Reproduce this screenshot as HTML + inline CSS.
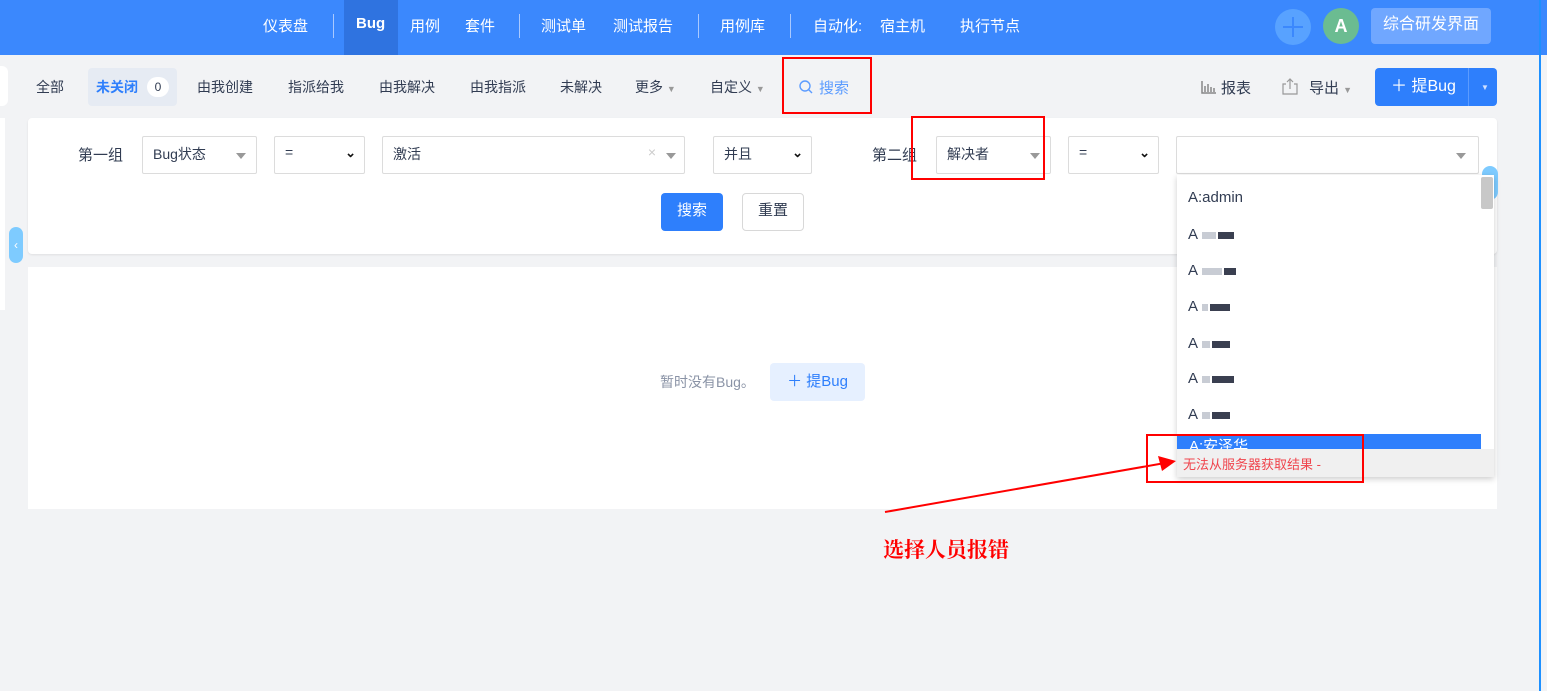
<!DOCTYPE html>
<html><head><meta charset="utf-8"><style>
*{box-sizing:border-box;margin:0;padding:0}
body{width:1547px;height:691px;overflow:hidden;background:#f2f3f5;font-family:"Liberation Sans","Noto Sans CJK SC",sans-serif;font-size:14px;color:#313c52;position:relative}
.a{position:absolute}
.top{left:0;top:0;width:1547px;height:55px;background:#3b88fd}
.nav{color:#fff;font-size:15px;top:15px}
.sep{top:14px;width:1px;height:24px;background:#a9c9ff}
.tab{top:77px;font-size:14px;color:#313c52}
.sel{background:#fff;border:1px solid #dcdcdc;height:38px;top:136px;border-radius:2px;font-size:14px;padding:7px 10px}
.tri{width:0;height:0;border-left:5px solid transparent;border-right:5px solid transparent;border-top:6px solid #999}
.chev{font-size:13px;font-weight:bold;color:#111}
.red{border:2px solid #f00}
.blur{display:inline-block;height:7px;background:#c8ccd4;margin-right:2px}
</style></head><body>
<div class="a top"></div>
<div class="a" style="left:344px;top:0;width:54px;height:55px;background:#2f73e0"></div>
<div class="a nav" style="left:263px">仪表盘</div>
<div class="a sep" style="left:333px"></div>
<div class="a nav" style="left:356px;font-weight:bold">Bug</div>
<div class="a nav" style="left:410px">用例</div>
<div class="a nav" style="left:465px">套件</div>
<div class="a sep" style="left:519px"></div>
<div class="a nav" style="left:541px">测试单</div>
<div class="a nav" style="left:613px">测试报告</div>
<div class="a sep" style="left:698px"></div>
<div class="a nav" style="left:720px">用例库</div>
<div class="a sep" style="left:790px"></div>
<div class="a nav" style="left:813px">自动化:</div>
<div class="a nav" style="left:880px">宿主机</div>
<div class="a nav" style="left:960px">执行节点</div>
<div class="a" style="left:1275px;top:9px;width:36px;height:36px;border-radius:50%;background:#58a2ff"></div>
<div class="a" style="left:1283px;top:26px;width:20px;height:2px;background:#3b88fd"></div>
<div class="a" style="left:1292px;top:17px;width:2px;height:20px;background:#3b88fd"></div>
<div class="a" style="left:1323px;top:8px;width:36px;height:36px;border-radius:50%;background:#6bbc91;color:#fff;font-size:18px;line-height:36px;text-align:center;font-weight:bold">A</div>
<div class="a" style="left:1371px;top:8px;width:120px;height:36px;border-radius:4px;background:#70a7ff;color:#fff;font-size:16px;line-height:34px;text-align:center">综合研发界面</div>

<div class="a" style="left:0;top:66px;width:8px;height:40px;background:#fff;border-radius:0 6px 6px 0"></div>
<div class="a" style="left:0;top:118px;width:5px;height:192px;background:#fff"></div>
<div class="a tab" style="left:36px">全部</div>
<div class="a" style="left:88px;top:68px;width:89px;height:38px;background:#e6ebf3;border-radius:4px"></div>
<div class="a tab" style="left:96px;color:#2e7ffc;font-weight:bold">未关闭</div>
<div class="a" style="left:147px;top:77px;width:22px;height:20px;border-radius:10px;background:#fff;font-size:12px;text-align:center;line-height:20px">0</div>
<div class="a tab" style="left:197px">由我创建</div>
<div class="a tab" style="left:288px">指派给我</div>
<div class="a tab" style="left:379px">由我解决</div>
<div class="a tab" style="left:470px">由我指派</div>
<div class="a tab" style="left:560px">未解决</div>
<div class="a tab" style="left:635px">更多 <span style="font-size:9px;color:#999">▼</span></div>
<div class="a tab" style="left:710px">自定义 <span style="font-size:9px;color:#999">▼</span></div>
<svg class="a" style="left:799px;top:80px" width="14" height="14"><circle cx="6" cy="6" r="5" fill="none" stroke="#5c9cff" stroke-width="1.4"/><line x1="9.5" y1="9.5" x2="13" y2="13" stroke="#5c9cff" stroke-width="1.4"/></svg>
<div class="a tab" style="left:819px;color:#5c9cff;font-size:15px">搜索</div>
<div class="a red" style="left:782px;top:57px;width:90px;height:57px"></div>
<svg class="a" style="left:1201px;top:80px" width="16" height="14"><path d="M1 1V13H15M4 6V12M7 4V12M10 7V12M13 8V12" stroke="#888" stroke-width="1.5" fill="none"/></svg>
<div class="a tab" style="left:1221px;font-size:15px">报表</div>
<svg class="a" style="left:1281px;top:77px" width="18" height="18"><path d="M5 7H2V17H16V7H13M9 12V2M6 5L9 2L12 5" stroke="#999" stroke-width="1.2" fill="none"/></svg>
<div class="a tab" style="left:1309px;font-size:15px">导出 <span style="font-size:9px;color:#999">▼</span></div>
<div class="a" style="left:1375px;top:68px;width:122px;height:38px;background:#2e7ffc;border-radius:4px;color:#fff;font-size:16px;line-height:38px;padding-left:16px">＋ 提Bug</div>
<div class="a" style="left:1468px;top:68px;width:1px;height:38px;background:#5b9bff"></div>
<div class="a" style="left:1481px;top:83px;font-size:8px;color:#cfe0ff">▼</div>

<div class="a" style="left:28px;top:118px;width:1469px;height:136px;background:#fff;border-radius:4px;box-shadow:0 1px 2px rgba(0,0,0,.08)"></div>
<div class="a" style="left:9px;top:227px;width:14px;height:36px;background:#7ecbff;border-radius:7px;color:#fff;font-size:12px;line-height:36px;text-align:center">‹</div>
<div class="a" style="left:78px;top:144px;font-size:15px">第一组</div>
<div class="a sel" style="left:142px;width:115px">Bug状态<div class="a tri" style="right:10px;top:16px"></div></div>
<div class="a sel" style="left:274px;width:91px">=<span class="a chev" style="right:8px;top:8px">⌄</span></div>
<div class="a sel" style="left:382px;width:303px">激活<span class="a" style="right:28px;top:7px;color:#ccc">×</span><div class="a tri" style="right:8px;top:16px"></div></div>
<div class="a sel" style="left:713px;width:99px">并且<span class="a chev" style="right:8px;top:8px">⌄</span></div>
<div class="a" style="left:872px;top:144px;font-size:15px">第二组</div>
<div class="a sel" style="left:936px;width:115px">解决者<div class="a tri" style="right:10px;top:16px"></div></div>
<div class="a red" style="left:911px;top:116px;width:134px;height:64px"></div>
<div class="a sel" style="left:1068px;width:91px">=<span class="a chev" style="right:8px;top:8px">⌄</span></div>
<div class="a sel" style="left:1176px;width:303px"><div class="a tri" style="right:12px;top:16px"></div></div>
<div class="a" style="left:661px;top:193px;width:62px;height:38px;background:#2e7ffc;border-radius:4px;color:#fff;font-size:15px;line-height:36px;text-align:center">搜索</div>
<div class="a" style="left:742px;top:193px;width:62px;height:38px;background:#fff;border:1px solid #d8d8d8;border-radius:4px;font-size:15px;line-height:34px;text-align:center">重置</div>

<div class="a" style="left:28px;top:267px;width:1469px;height:242px;background:#fff"></div>
<div class="a" style="left:660px;top:372px;color:#8a93a6;font-size:14px">暂时没有Bug。</div>
<div class="a" style="left:770px;top:363px;width:95px;height:38px;background:#e6f0ff;border-radius:4px;color:#2e7ffc;font-size:15px;line-height:38px;text-align:center">＋ 提Bug</div>

<div class="a" style="left:1482px;top:166px;width:16px;height:34px;background:#7ecbff;border-radius:8px"></div>
<div class="a" style="left:1177px;top:175px;width:317px;height:302px;background:#fff;box-shadow:0 2px 6px rgba(0,0,0,.2)"></div>
<div class="a" style="left:1481px;top:177px;width:12px;height:32px;background:#c8c8c8;border-radius:2px"></div>
<div class="a" style="left:1188px;top:189px;font-size:15px">A:admin</div>
<div class="a" style="left:1188px;top:226px;font-size:15px">A<span class="blur" style="width:14px;margin-left:4px"></span><span class="blur" style="width:16px;background:#3a3f50"></span></div>
<div class="a" style="left:1188px;top:262px;font-size:15px">A<span class="blur" style="width:20px;margin-left:4px"></span><span class="blur" style="width:12px;background:#3a3f50"></span></div>
<div class="a" style="left:1188px;top:298px;font-size:15px">A<span class="blur" style="width:6px;margin-left:4px"></span><span class="blur" style="width:20px;background:#3a3f50"></span></div>
<div class="a" style="left:1188px;top:335px;font-size:15px">A<span class="blur" style="width:8px;margin-left:4px"></span><span class="blur" style="width:18px;background:#3a3f50"></span></div>
<div class="a" style="left:1188px;top:370px;font-size:15px">A<span class="blur" style="width:8px;margin-left:4px"></span><span class="blur" style="width:22px;background:#3a3f50"></span></div>
<div class="a" style="left:1188px;top:406px;font-size:15px">A<span class="blur" style="width:8px;margin-left:4px"></span><span class="blur" style="width:18px;background:#3a3f50"></span></div>
<div class="a" style="left:1177px;top:434px;width:304px;height:16px;background:#2e7ffc;overflow:hidden;color:#fff;font-size:15px;padding-left:12px;line-height:26px">A:安泽华</div>
<div class="a" style="left:1177px;top:449px;width:317px;height:28px;background:#f0f0f0;color:#f0444c;font-size:13px;padding:5px 0 0 6px">无法从服务器获取结果 -</div>
<div class="a red" style="left:1146px;top:434px;width:218px;height:49px"></div>

<svg class="a" style="left:880px;top:455px" width="300" height="60"><line x1="5" y1="57" x2="285" y2="8" stroke="#f00" stroke-width="2"/><polygon points="296,6 278,1 282,16" fill="#f00"/></svg>
<div class="a" style="left:883px;top:534px;color:#f00;font-size:21px;font-weight:bold;font-family:'Liberation Serif','Noto Serif CJK SC',serif">选择人员报错</div>
<div class="a" style="left:1539px;top:0;width:2px;height:691px;background:#1e90ff"></div>
</body></html>
